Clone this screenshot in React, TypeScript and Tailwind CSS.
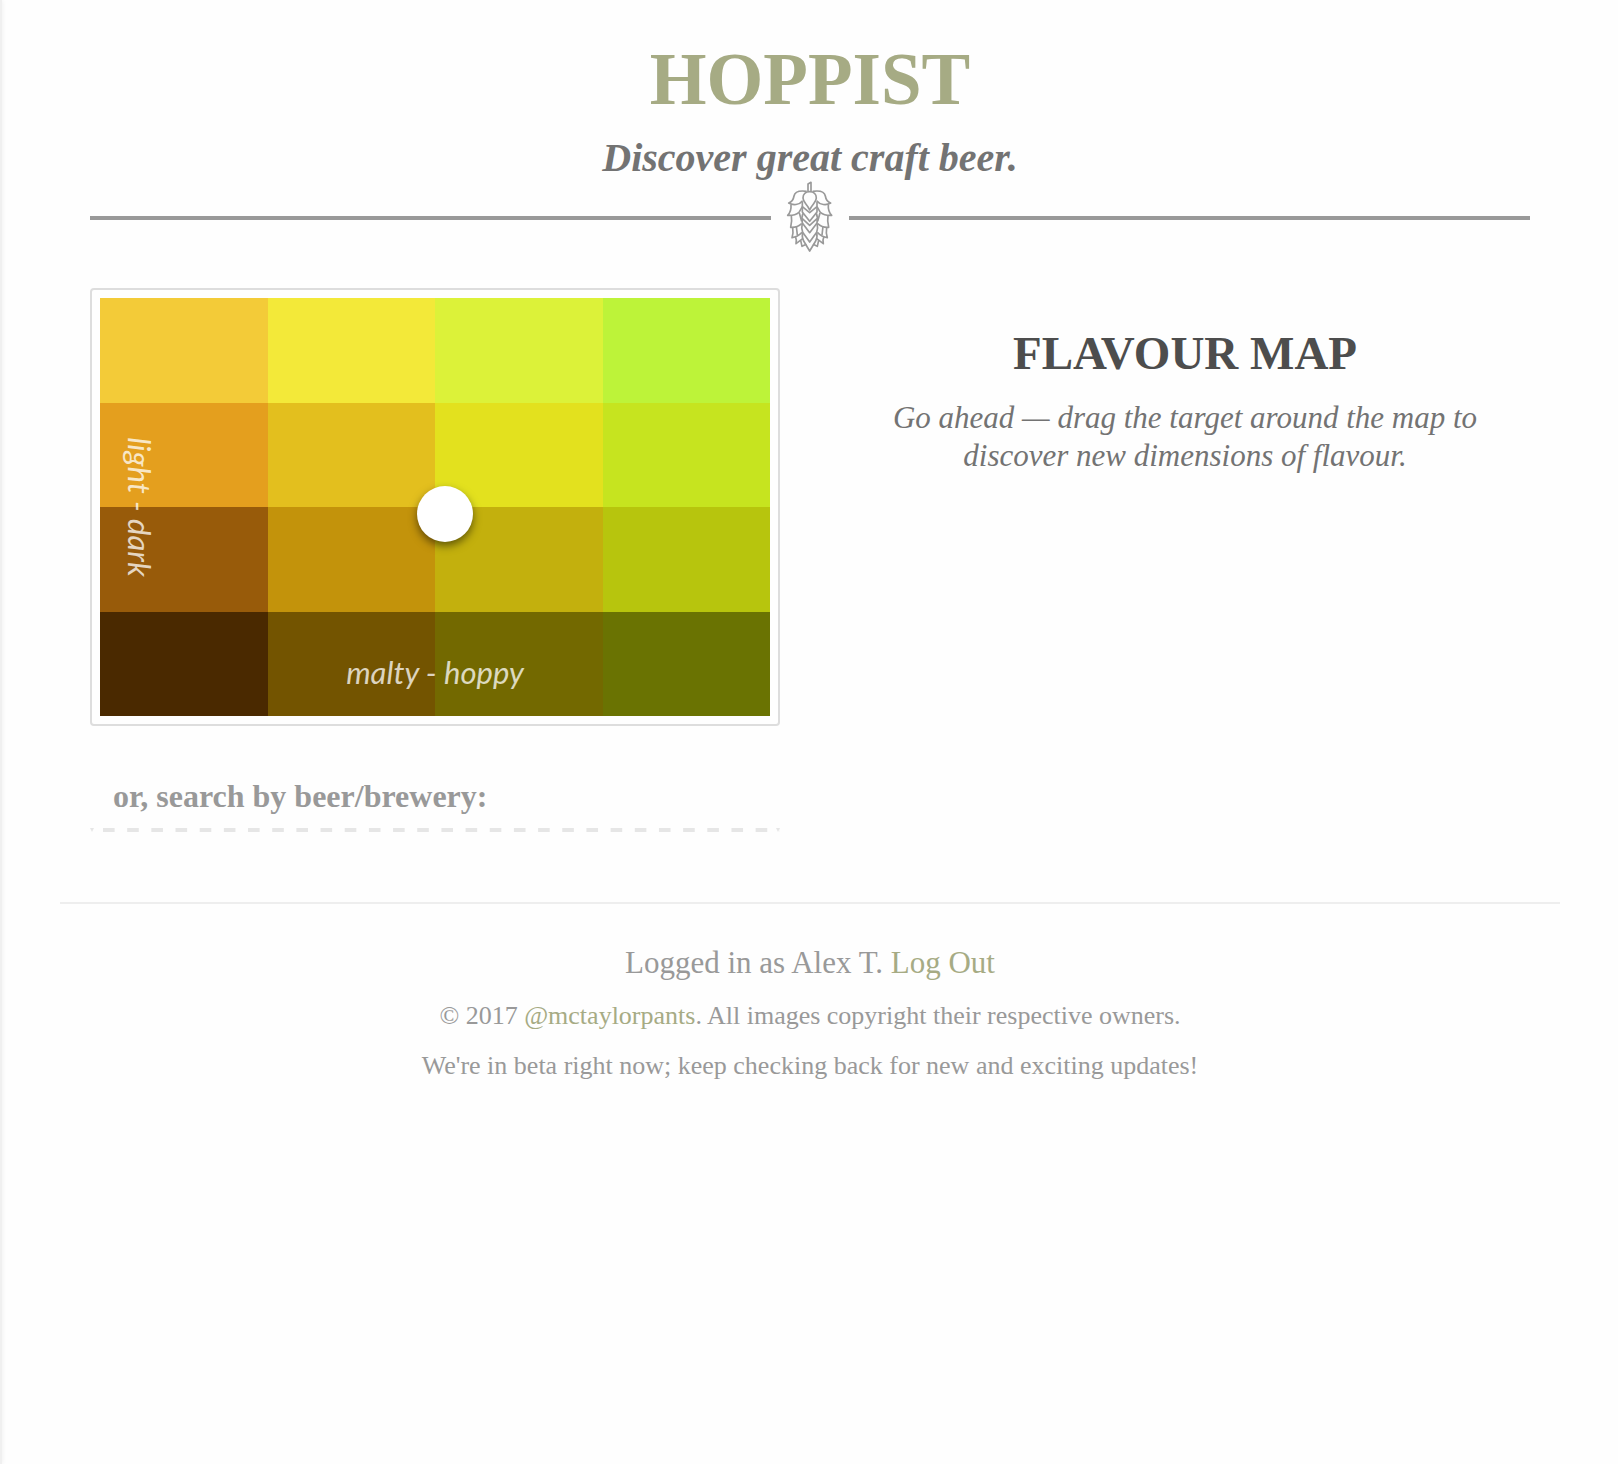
const rows = [
  ["bg-[#f3cb38]", "bg-[#f3e939]", "bg-[#dcf239]", "bg-[#bdf339]"],
  ["bg-[#e49f1e]", "bg-[#e3bf1e]", "bg-[#e3e11e]", "bg-[#c6e41f]"],
  ["bg-[#985b0a]", "bg-[#c3930b]", "bg-[#c3b00d]", "bg-[#b7c50d]"],
  ["bg-[#4a2900]", "bg-[#735400]", "bg-[#736900]", "bg-[#6a7302]"],
];

function HopIcon() {
  return (
    <svg
      viewBox="75 30 150 225"
      className="h-[75px] w-[50px] shrink-0"
      fill="none"
      stroke="#999"
      strokeWidth="5"
      strokeLinejoin="round"
      aria-hidden="true"
    >
      {/* stem */}
      <path d="M144 64V42l9-5v27" />
      {/* top cone scale */}
      <path d="M149 65c-12 0-20 8-20 19 0 13 12 17 20 36 8-19 20-23 20-36 0-11-8-19-20-19Z" />
      {/* top leaves */}
      <path d="M140 64c-22-3-36 3-38 14-2 12-6 18-16 21 13 8 32 6 42-7M158 64c22-3 36 3 38 14 2 12 6 18 16 21-13 8-32 6-42-7" />
      {/* second pair */}
      <path d="M93 104c1 13-2 24-10 32 14 1 25-2 34-9l10-17M205 104c-1 13 2 24 10 32-14 1-25-2-34-9l-10-17" />
      {/* central chevrons */}
      <path d="M127 96v30l22 28 22-28V96" />
      <path d="M127 110l22 18 22-18" />
      <path d="M129 130c-4 9-4 18-2 29l22 29 22-29c2-11 2-20-2-29M127 146l22 20 22-20" />
      <path d="M127 160c-3 10-2 18 1 27l21 29 21-29c3-9 4-17 1-27" />
      <path d="M128 188c-2 9-1 18 3 25l18 30 18-30c4-7 5-16 3-25" />
      {/* side scales */}
      <path d="M94 136c2 13 1 25-2 36 13 1 23-2 33-11M204 136c-2 13-1 25 2 36-13 1-23-2-33-11" />
      <path d="M118 129l7 25M180 129l-7 25" />
      <path d="M98 172c2 12 1 22-2 31 12-2 21-7 30-16M200 172c-2 12-1 22 2 31-12-2-21-7-30-16" />
      <path d="M109 169l3 26M189 169l-3 26" />
      <path d="M106 199c4 9 4 16 2 22l20-15M192 199c-4 9-4 16-2 22l-20-15" />
      <path d="M122 211l4 18 13-6M176 211l-4 18-13-6" />
    </svg>
  );
}

function FlavourMap() {
  return (
    <div className="rounded border-2 border-[#ddd] p-2">
      <div className="relative">
        <div className="grid grid-cols-4">
          {rows.flat().map((color) => (
            <div key={color} className={`aspect-[1675/1045] ${color}`} />
          ))}
        </div>
        <div className="absolute inset-y-0 left-[22px] flex w-[36px] items-center justify-center">
          <span className="shrink-0 rotate-90 font-[Lato,sans-serif] text-[31px] leading-[36px] whitespace-nowrap text-white/75 italic">
            light - dark
          </span>
        </div>
        <span className="absolute inset-x-0 bottom-[26px] text-center font-[Lato,sans-serif] text-[31px] leading-[36px] text-white/75 italic">
          malty - hoppy
        </span>
        <button
          type="button"
          aria-label="Flavour target"
          className="absolute top-[188px] left-[317px] size-14 rounded-full bg-white shadow-[0_4px_8px_rgba(0,0,0,0.5)]"
        />
      </div>
    </div>
  );
}

export default function App() {
  return (
    <div className="flex min-h-screen bg-[#fefefe] font-['Liberation_Serif',serif] text-[#777]">
      <div className="w-[2px] bg-[#f0f0f0] shadow-[0_0_4px_rgba(0,0,0,0.1)]" />
      <div className="flex-1 px-[58px]">
        <header className="px-[30px] pt-[40px] text-center">
          <h1 className="text-[73px] leading-[80px] font-bold text-[#a6ab84]">HOPPIST</h1>
          <p className="mt-[16px] text-[40px] leading-[44px] font-bold text-[#737373] italic">
            Discover great craft beer.
          </p>
          <div className="flex items-center">
            <div className="h-1 flex-1 bg-[#999]" />
            <div className="flex w-[78px] justify-center">
              <HopIcon />
            </div>
            <div className="h-1 flex-1 bg-[#999]" />
          </div>
        </header>

        <main className="mt-[33px] grid grid-cols-2 gap-[60px] px-[30px]">
          <section>
            <FlavourMap />
            <form className="mt-[42px]">
              <input
                type="text"
                aria-label="Search by beer or brewery"
                placeholder="or, search by beer/brewery:"
                className="block h-14 w-full bg-transparent px-[23px] text-[32px] font-bold text-[#777] outline-none placeholder:text-[#999] placeholder:opacity-100"
              />
              <div className="mt-1 flex h-1">
                <div className="w-1 bg-[#e6e6e6] [clip-path:polygon(0_0,100%_0,50%_100%)]" />
                <div className="-mr-1 ml-[9px] flex-1 bg-[linear-gradient(90deg,#e6e6e6_50%,transparent_50%)] bg-[length:24px_4px] bg-repeat-round" />
                <div className="w-1 bg-[#e6e6e6] [clip-path:polygon(0_0,100%_0,50%_100%)]" />
              </div>
            </form>
          </section>
          <section className="pt-[39px] text-center">
            <h2 className="text-[47px] leading-[52px] font-bold text-[#4d4d4d]">FLAVOUR MAP</h2>
            <p className="mx-auto mt-[20px] max-w-[620px] text-[31px] leading-[38px] text-[#737373] italic">
              Go ahead — drag the target around the map to discover new dimensions of flavour.
            </p>
          </section>
        </main>

        <footer className="mt-[70px] border-t-2 border-[#eee] pt-[39px] text-center text-[#999]">
          <p className="text-[31px] leading-[40px]">
            Logged in as Alex T.{" "}
            <a href="#logout" className="text-[#a6ab84]">
              Log Out
            </a>
          </p>
          <p className="mt-[17px] text-[26px] leading-[32px]">
            © 2017{" "}
            <a href="#mctaylorpants" className="text-[#a6ab84]">
              @mctaylorpants
            </a>
            . All images copyright their respective owners.
          </p>
          <p className="mt-[18px] text-[26px] leading-[32px]">
            We're in beta right now; keep checking back for new and exciting updates!
          </p>
        </footer>
      </div>
    </div>
  );
}
